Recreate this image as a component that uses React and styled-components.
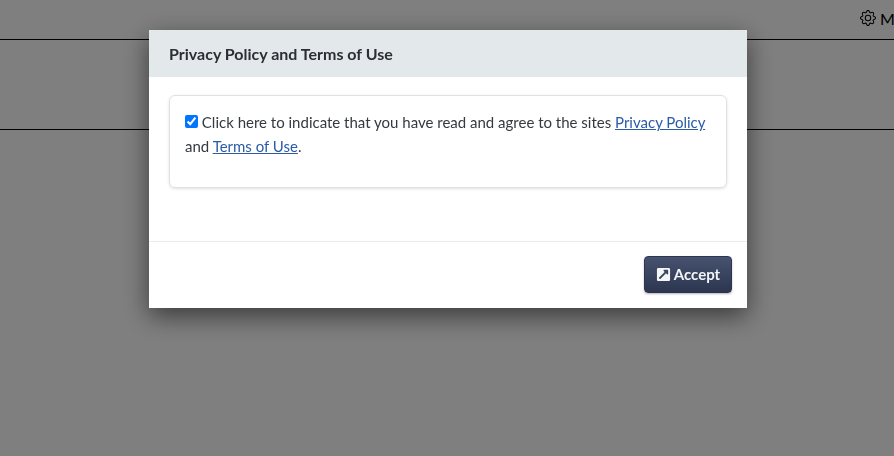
import React from 'react';
import styled, { createGlobalStyle } from 'styled-components';
import { BsGear } from 'react-icons/bs';
import { FaExternalLinkSquareAlt } from 'react-icons/fa';

const Global = createGlobalStyle`
  html, body { margin: 0; padding: 0; height: 100%; overflow: hidden; background: #fff; }
  body { font-family: Lato, "Liberation Sans", sans-serif; color: #212529; }
`;

function App() {
  return (
    <>
      <Global />
      <Page>
        <TopBar>
          <GearIcon />
          <MenuLabel>Menu</MenuLabel>
        </TopBar>
        <SubBar />
      </Page>
      <Backdrop />
      <Modal>
        <ModalHeader>Privacy Policy and Terms of Use</ModalHeader>
        <ModalBody>
          <Card>
            <Check type="checkbox" defaultChecked />
            {' '}Click here to indicate that you have read and agree to the sites{' '}
            <a href="#">Privacy Policy</a> and <a href="#">Terms of Use</a>.
          </Card>
        </ModalBody>
        <ModalFooter>
          <AcceptButton>
            <FaExternalLinkSquareAlt />
            Accept
          </AcceptButton>
        </ModalFooter>
      </Modal>
    </>
  );
}

const Page = styled.div`
  width: 100%;
  height: 456px;
  overflow: hidden;
`
const TopBar = styled.div`
  height: 39px;
  box-sizing: content-box;
  border-bottom: 1px solid #000;
  display: flex;
  align-items: center;
  justify-content: flex-end;
  white-space: nowrap;
  margin-right: -27px;
  gap: 4px;
`
const GearIcon = styled(BsGear)`
  width: 16px;
  height: 16px;
  color: #000;
  margin-top: -3px;
`
const MenuLabel = styled.span`
  font-size: 16px;
  color: #000;
  margin-top: -3px;
`
const SubBar = styled.div`
  height: 89px;
  border-bottom: 1px solid #000;
`
const Backdrop = styled.div`
  position: fixed;
  inset: 0;
  background: rgba(0,0,0,.5);
`
const Modal = styled.div`
  position: fixed;
  top: 30px;
  left: 149px;
  width: 598px;
  height: 278px;
  background: #fff;
  display: flex;
  flex-direction: column;
  box-shadow: 0 8px 24px rgba(0,0,0,.55);
`
const ModalHeader = styled.div`
  height: 47px;
  background: #e3e8eb;
  display: flex;
  align-items: center;
  padding: 0 20px;
  font-size: 16px;
  font-weight: 700;
  color: #2b2f33;
`
const ModalBody = styled.div`
  flex: 1;
  padding: 18px 20px 0;
`
const Card = styled.div`
  box-sizing: border-box;
  height: 93px;
  border: 1px solid #dee2e6;
  border-radius: 6px;
  box-shadow: 0 1px 3px rgba(0,0,0,.12);
  padding: 14px 15px;
  font-size: 15px;
  line-height: 24px;
  color: #343a40;
  a { color: #2a5ba8; text-decoration: underline; }
`
const Check = styled.input`
  width: 13px;
  height: 13px;
  margin: 0;
  accent-color: #0075ff;
`
const ModalFooter = styled.div`
  height: 67px;
  border-top: 1px solid #e9ecef;
  display: flex;
  align-items: center;
  justify-content: flex-end;
  padding: 0 15px 2px;
  box-sizing: border-box;
`
const AcceptButton = styled.button`
  box-sizing: border-box;
  width: 88px;
  height: 37px;
  display: flex;
  align-items: center;
  justify-content: center;
  gap: 3px;
  border: 1px solid #2c3650;
  border-radius: 4px;
  background: linear-gradient(#46526f, #2c3650);
  box-shadow: 0 1px 2px rgba(0,0,0,.3);
  color: #f4f5f7;
  font-family: Lato, "Liberation Sans", sans-serif;
  font-size: 15px;
  font-weight: 700;
  svg { width: 15px; height: 15px; }
`

export default App
